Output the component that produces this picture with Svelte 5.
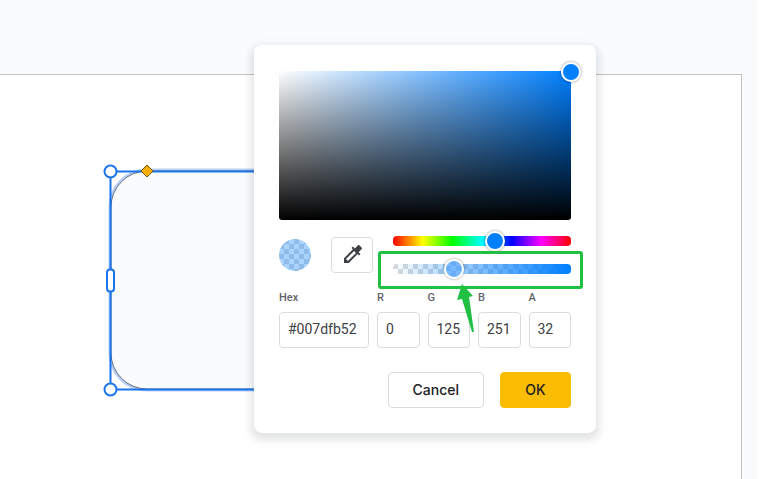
<script>
	let hue = 210;
	let alpha = 32;
	let hex = "#007dfb52";
	let channels = [
		{ label: "R", value: 0 },
		{ label: "G", value: 125 },
		{ label: "B", value: 251 },
		{ label: "A", value: 32 }
	];
</script>

<main>
	<div class="slide"></div>

	<svg class="canvas" width="400" height="260" viewBox="0 0 400 260" aria-hidden="true">
		<rect x="10" y="20" width="380" height="220" rx="37" fill="none" stroke="#b7d0f8" stroke-width="3" />
		<rect x="11" y="21" width="378" height="218" rx="36" fill="#f9fbfd" stroke="#696e75" />
		<rect x="10.5" y="21.5" width="379" height="218" fill="none" stroke="#1b74ec" stroke-width="2" />
		<g fill="#fff" stroke="#1b74ec" stroke-width="2">
			<circle cx="10.5" cy="21.5" r="6" />
			<circle cx="10.5" cy="239.5" r="6" />
			<rect x="7" y="119.5" width="7" height="22" rx="3" />
		</g>
		<path d="M47 15 53 21 47 27 41 21Z" fill="#f9b005" stroke="#76560d" />
	</svg>

	<div class="picker" role="dialog" aria-label="Custom color">
		<div class="shade">
			<span class="knob"></span>
		</div>

		<div class="tools">
			<span class="swatch"></span>
			<button class="dropper" aria-label="Pick a color">
				<svg width="24" height="24" viewBox="-1 1 24 24" fill="#3c4043">
					<path d="M20.71 5.63l-2.34-2.34a1 1 0 0 0-1.41 0l-3.12 3.12-1.93-1.91-1.41 1.41 1.42 1.42L3 16.25V21h4.75l8.92-8.92 1.42 1.42 1.41-1.41-1.92-1.92 3.12-3.12a1 1 0 0 0 .01-1.42zM6.92 19L5 17.08l8.06-8.06 1.92 1.92L6.92 19z" />
				</svg>
			</button>
			<div class="sliders">
				<input class="hue" type="range" min="0" max="360" aria-label="Hue" bind:value={hue} />
				<input class="alpha" type="range" min="0" max="100" aria-label="Alpha" bind:value={alpha} />
				<div class="marker">
					<svg width="20" height="50" viewBox="0 0 20 50" aria-hidden="true">
						<path d="M6 0 17 12 13 13 18 48 16 48 6 15 1 16Z" fill="#21bf43" />
					</svg>
				</div>
			</div>
		</div>

		<div class="fields">
			<label>Hex<input type="text" bind:value={hex} /></label>
			{#each channels as channel}
				<label>{channel.label}<input type="text" bind:value={channel.value} /></label>
			{/each}
		</div>

		<div class="actions">
			<button class="cancel">Cancel</button>
			<button class="ok">OK</button>
		</div>
	</div>
</main>

<style>
	:global(body) {
		background: #f9fbfd;
	}
	main {
		position: relative;
		box-sizing: border-box;
		min-height: 100vh;
		padding: 74px 15px 0 0;
		border-right: 7px solid #fff;
		overflow: hidden;
		display: flex;
		font-family: Roboto, "Liberation Sans", sans-serif;
	}
	.slide {
		flex: 1;
		background: #fff;
		border: 1px solid #bfc1c3;
		border-width: 1px 1px 0 0;
	}
	.canvas {
		position: absolute;
		left: 100px;
		top: 150px;
	}

	.picker {
		position: absolute;
		left: 254px;
		top: 45px;
		box-sizing: border-box;
		width: 342px;
		padding: 26px 25px 25px;
		background: #fff;
		border-radius: 8px;
		box-shadow: 0 4px 8px 3px rgba(60, 64, 67, 0.15);
	}
	.shade {
		position: relative;
		height: 149px;
		border-radius: 0 0 3px 3px;
		background:
			linear-gradient(to bottom, transparent, #000),
			linear-gradient(to right, #fff, #007fff);
	}
	.knob {
		position: absolute;
		right: -10px;
		top: -9px;
		box-sizing: border-box;
		width: 20px;
		height: 20px;
		border: 2px solid #fff;
		border-radius: 50%;
		background: #007fff;
		box-shadow: 0 0 2px 1px rgba(0, 0, 0, 0.2);
	}

	.tools {
		display: flex;
		align-items: center;
		gap: 20px;
		height: 36px;
		margin-top: 17px;
	}
	.swatch {
		width: 32px;
		height: 32px;
		border-radius: 50%;
		background: repeating-conic-gradient(#8fbbe9 0 25%, #aad4fe 0 50%) 0 0 / 10px 10px;
	}
	.dropper {
		display: flex;
		align-items: center;
		justify-content: center;
		width: 42px;
		height: 36px;
		padding: 0;
		background: #fff;
		border: 1px solid #dadce0;
		border-radius: 4px;
	}
	.sliders {
		position: relative;
		flex: 1;
		display: flex;
		flex-direction: column;
		gap: 18px;
	}
	input[type="range"] {
		appearance: none;
		display: block;
		width: 100%;
		height: 10px;
		margin: 0;
		border-radius: 4px;
	}
	input[type="range"]::-webkit-slider-thumb {
		appearance: none;
		box-sizing: border-box;
		width: 20px;
		height: 20px;
		border: 2px solid #fff;
		border-radius: 50%;
		background: #007fff;
		box-shadow: 0 0 2px 1px rgba(0, 0, 0, 0.2);
	}
	.hue {
		background: linear-gradient(to right, #f00, #ff0, #0f0, #0ff, #00f, #f0f, #f00);
	}
	.alpha {
		background:
			linear-gradient(to right, transparent, #007fff),
			repeating-conic-gradient(#fff 0 25%, #d6dade 0 50%) 0 0 / 10px 10px;
	}
	input.alpha::-webkit-slider-thumb {
		background: repeating-conic-gradient(#68adf5 0 25%, #7ab8fc 0 50%) 0 0 / 10px 10px;
	}
	.marker {
		position: absolute;
		left: -15px;
		right: -12px;
		bottom: -15px;
		box-sizing: border-box;
		height: 38px;
		border: 3px solid #21bf43;
		border-radius: 3px;
		pointer-events: none;
	}
	.marker svg {
		position: absolute;
		left: 75px;
		top: 30px;
	}

	.fields {
		display: grid;
		grid-template-columns: 90px repeat(4, 1fr);
		gap: 8px;
		margin-top: 17px;
	}
	.fields label {
		color: #5f6368;
		font-size: 11px;
		font-weight: 500;
		line-height: 16px;
	}
	.fields input {
		display: block;
		box-sizing: border-box;
		width: 100%;
		height: 36px;
		margin-top: 6px;
		padding: 0 8px 2px;
		border: 1px solid #dadce0;
		border-radius: 4px;
		color: #3c4043;
		font: 14px Roboto, "Liberation Sans", sans-serif;
	}

	.actions {
		display: flex;
		justify-content: flex-end;
		gap: 16px;
		margin-top: 24px;
	}
	.actions button {
		height: 36px;
		padding: 0 24px 1px;
		border: 1px solid #dadce0;
		border-radius: 4px;
		background: #fff;
		color: #202124;
		font: 500 14px Inter, Roboto, sans-serif;
	}
	.actions .ok {
		min-width: 71px;
		background: #fbbc04;
		border-color: #fbbc04;
	}
</style>
